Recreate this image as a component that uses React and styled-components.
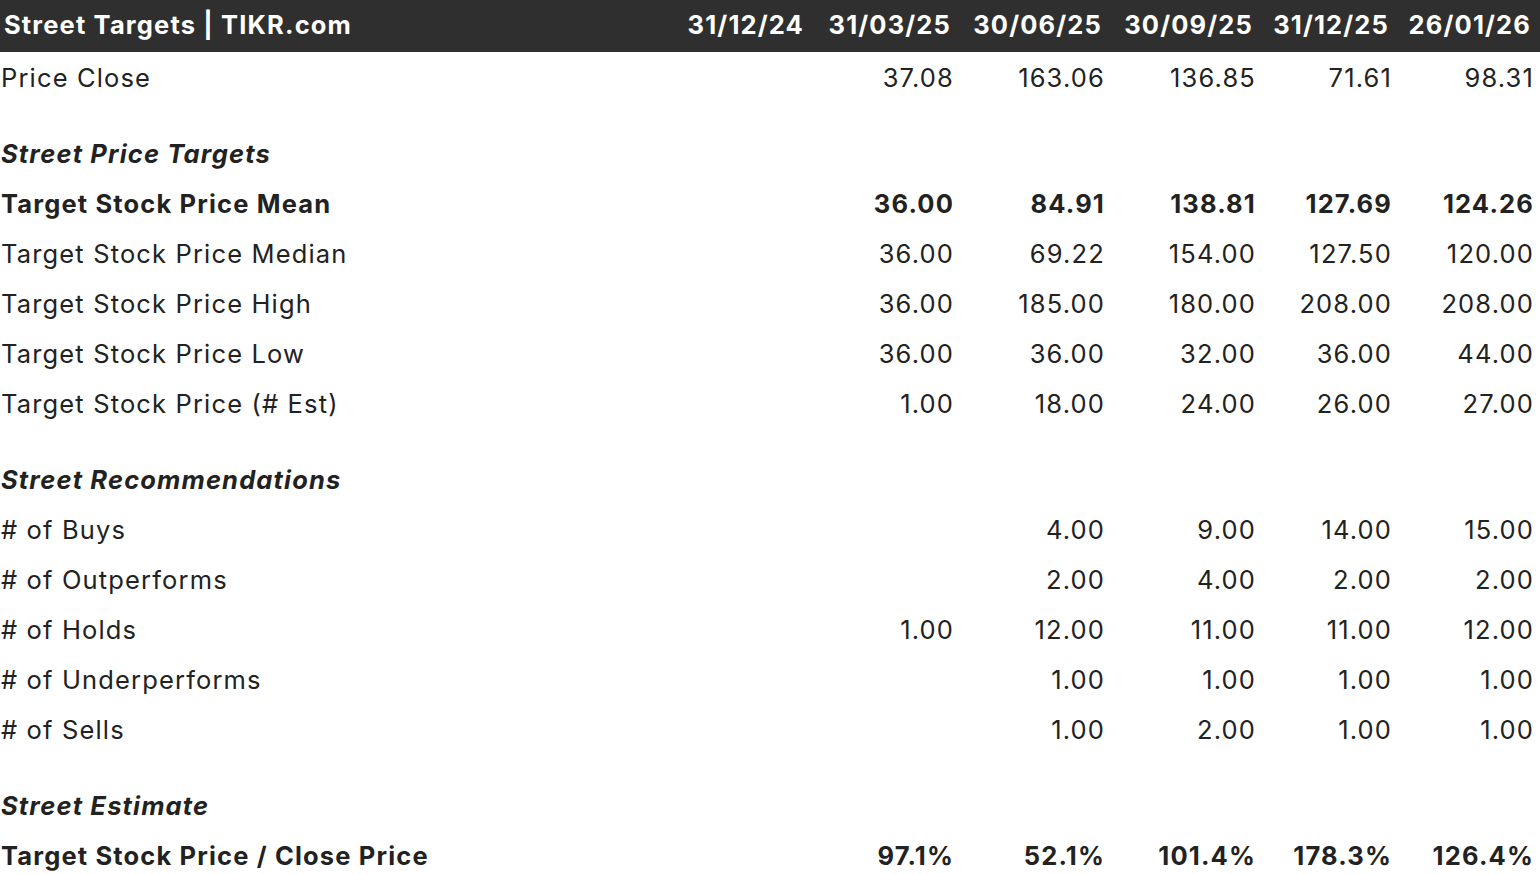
import React from "react";
import styled, { createGlobalStyle } from "styled-components";

const Global = createGlobalStyle`
  html, body { margin: 0; padding: 0; background: #ffffff; }
  body { font-family: Inter, "Noto Sans", "Liberation Sans", sans-serif; color: #222222; }
`;

const COLS = "1fr 136px 147px 151px 151px 136px 142px";

const Page = styled.div`
  width: 1540px;
  padding-right: 6px;
  box-sizing: border-box;
  letter-spacing: 1.15px;
`;

const HeaderBar = styled.div`
  display: grid;
  grid-template-columns: ${COLS};
  height: 52px;
  align-items: center;
  background: #2f2f2f;
  color: #ffffff;
  font-weight: 700;
  font-size: 25.5px;
  margin-right: -6px;
  padding-right: 6px;
  padding-bottom: 4px;
  box-sizing: border-box;
`;

const Title = styled.div`
  padding-left: 4px;
  white-space: nowrap;
`;

const HeadCell = styled.div`
  text-align: right;
  padding-right: 3px;
  white-space: nowrap;
`;

const Row = styled.div`
  display: grid;
  grid-template-columns: ${COLS};
  height: 50px;
  align-items: center;
  font-size: 25.5px;
  font-weight: ${(p) => (p.$bold ? 700 : 400)};
  margin-top: ${(p) => (p.$gap ? "26px" : "0")};
`;

const Label = styled.div`
  padding-left: 1px;
  white-space: nowrap;
  font-style: ${(p) => (p.$italic ? "italic" : "normal")};
  font-weight: ${(p) => (p.$italic ? 700 : "inherit")};
`;

const Cell = styled.div`
  text-align: right;
  white-space: nowrap;
`;

const dates = ["31/12/24", "31/03/25", "30/06/25", "30/09/25", "31/12/25", "26/01/26"];

const rows = [
  { label: "Price Close", values: ["", "37.08", "163.06", "136.85", "71.61", "98.31"] },
  { label: "Street Price Targets", section: true, gap: true },
  { label: "Target Stock Price Mean", bold: true, values: ["", "36.00", "84.91", "138.81", "127.69", "124.26"] },
  { label: "Target Stock Price Median", values: ["", "36.00", "69.22", "154.00", "127.50", "120.00"] },
  { label: "Target Stock Price High", values: ["", "36.00", "185.00", "180.00", "208.00", "208.00"] },
  { label: "Target Stock Price Low", values: ["", "36.00", "36.00", "32.00", "36.00", "44.00"] },
  { label: "Target Stock Price (# Est)", values: ["", "1.00", "18.00", "24.00", "26.00", "27.00"] },
  { label: "Street Recommendations", section: true, gap: true },
  { label: "# of Buys", values: ["", "", "4.00", "9.00", "14.00", "15.00"] },
  { label: "# of Outperforms", values: ["", "", "2.00", "4.00", "2.00", "2.00"] },
  { label: "# of Holds", values: ["", "1.00", "12.00", "11.00", "11.00", "12.00"] },
  { label: "# of Underperforms", values: ["", "", "1.00", "1.00", "1.00", "1.00"] },
  { label: "# of Sells", values: ["", "", "1.00", "2.00", "1.00", "1.00"] },
  { label: "Street Estimate", section: true, gap: true },
  { label: "Target Stock Price / Close Price", bold: true, values: ["", "97.1%", "52.1%", "101.4%", "178.3%", "126.4%"] },
];

export default function App() {
  return (
    <Page>
      <Global />
      <HeaderBar>
        <Title>Street Targets | TIKR.com</Title>
        {dates.map((d) => (
          <HeadCell key={d}>{d}</HeadCell>
        ))}
      </HeaderBar>
      {rows.map((r) => (
        <Row key={r.label} $bold={r.bold} $gap={r.gap}>
          <Label $italic={r.section}>{r.label}</Label>
          {(r.values || ["", "", "", "", "", ""]).map((v, i) => (
            <Cell key={i}>{v}</Cell>
          ))}
        </Row>
      ))}
    </Page>
  );
}
